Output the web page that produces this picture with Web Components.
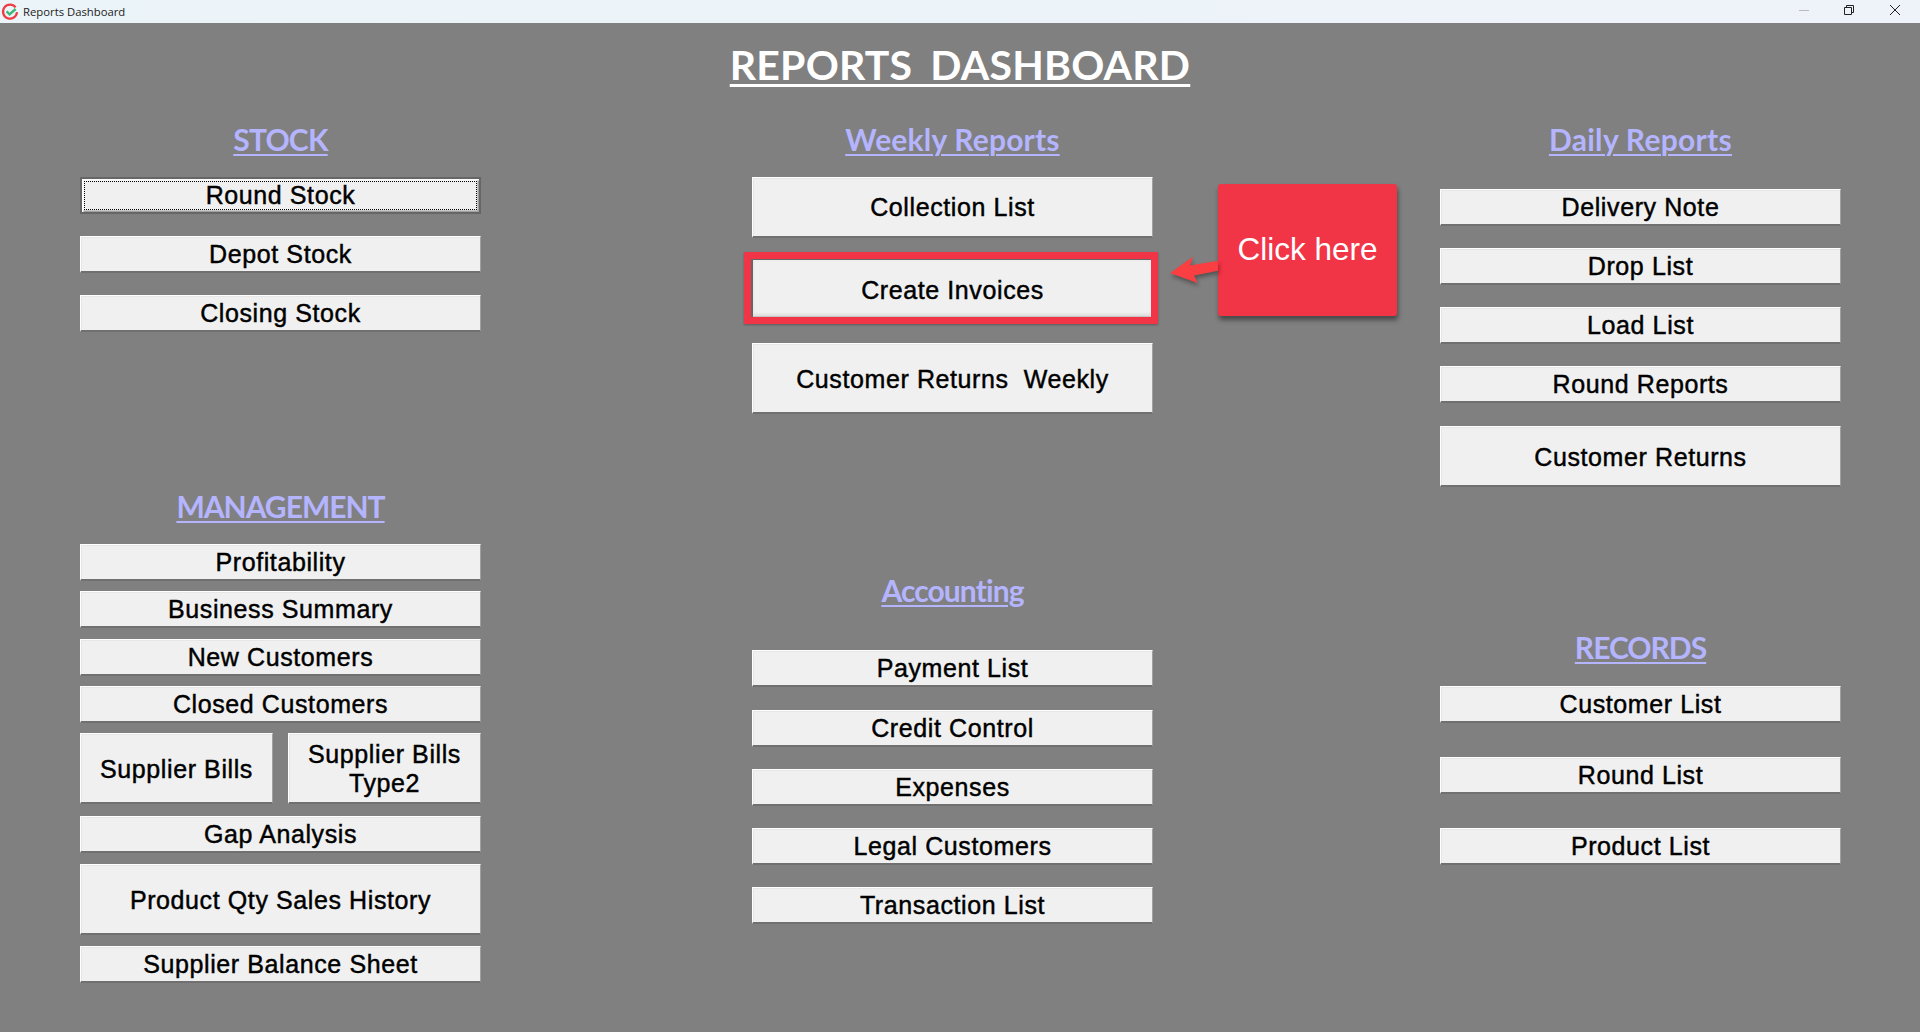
<!DOCTYPE html>
<html>
<head>
<meta charset="utf-8">
<title>Reports Dashboard</title>
<style>
html, body { margin: 0; height: 100%; background: #808080; overflow: hidden; }
</style>
</head>
<body>
<report-window>
  <report-column>
    <report-section title="STOCK" track="-0.8">
      <report-button top="23" default>Round Stock</report-button>
      <report-button top="22">Depot Stock</report-button>
      <report-button top="22">Closing Stock</report-button>
    </report-section>
    <report-section title="MANAGEMENT" track="-1" top="145">
      <report-button top="23">Profitability</report-button>
      <report-button top="10">Business Summary</report-button>
      <report-button top="11">New Customers</report-button>
      <report-button top="10">Closed Customers</report-button>
      <button-row top="10">
        <report-button h="71">Supplier Bills</report-button>
        <report-button h="71">Supplier Bills<br>Type2</report-button>
      </button-row>
      <report-button top="12">Gap Analysis</report-button>
      <report-button top="11" h="71">Product Qty Sales History</report-button>
      <report-button top="11">Supplier Balance Sheet</report-button>
    </report-section>
  </report-column>
  <report-column>
    <report-section title="Weekly Reports" track="0.2">
      <report-button top="23" h="61" nudge="0">Collection List</report-button>
      <report-button top="22" h="58" highlight>Create Invoices</report-button>
      <report-button top="25" h="71">Customer Returns&nbsp; Weekly</report-button>
    </report-section>
    <report-section title="Accounting" track="-0.9" top="147">
      <report-button top="45">Payment List</report-button>
      <report-button top="23">Credit Control</report-button>
      <report-button top="22">Expenses</report-button>
      <report-button top="22">Legal Customers</report-button>
      <report-button top="22">Transaction List</report-button>
    </report-section>
  </report-column>
  <report-column shift="16">
    <report-section title="Daily Reports" track="0.3">
      <report-button top="35">Delivery Note</report-button>
      <report-button top="22">Drop List</report-button>
      <report-button top="22">Load List</report-button>
      <report-button top="22">Round Reports</report-button>
      <report-button top="23" h="61">Customer Returns</report-button>
    </report-section>
    <report-section title="RECORDS" track="-1" top="131">
      <report-button top="24">Customer List</report-button>
      <report-button top="34">Round List</report-button>
      <report-button top="34">Product List</report-button>
    </report-section>
  </report-column>
  <click-callout slot="overlay">Click here</click-callout>
</report-window>

<script>
class ReportWindow extends HTMLElement {
    constructor() {
        super();
        this.attachShadow({ mode: "open" });
    }

    connectedCallback() {
        this.shadowRoot.innerHTML = `
            <style>
            :host { display: flex; flex-direction: column; height: 1032px; position: relative; background: #808080; }
            .bar {
                height: 23px; flex: none; display: flex; align-items: center;
                background: linear-gradient(90deg, #ebf4f8, #eef3f9);
                font: 11.3px "Open Sans", "Liberation Sans", sans-serif; color: #222;
            }
            .logo { width: 18px; height: 18px; margin: 0 4px 0 1px; flex: none; }
            .name { flex: 1; }
            .ctl { display: block; flex: none; }
            h1 {
                margin: 0; height: 87px; flex: none; text-align: center; box-sizing: border-box; padding-top: 16px;
                font: 700 41px/52px Lato, "Open Sans", sans-serif; color: #fff;
            }
            h1 span { text-decoration: underline; text-decoration-thickness: 3px; text-underline-offset: 4px; letter-spacing: 0.2px; word-spacing: 8px; }
            .cols { display: grid; grid-template-columns: 401px 401px 417px; column-gap: 271px; padding-left: 80px; }
            </style>
            <div class="bar">
                <svg class="logo" viewBox="0 0 18 18">
                    <path d="M14.600 4.400A7 7 0 1 0 16 9.200" fill="none" stroke="#ee3b44" stroke-width="2.200"/>
                    <path d="M5.600 8.400l3 3 6-5.400" fill="none" stroke="#3cb878" stroke-width="2.400"/>
                </svg>
                <span class="name">Reports Dashboard</span>
                <svg class="ctl" width="121" height="23" viewBox="0 0 121 23">
                    <path d="M0 10.500h10" stroke="#bbb" stroke-width="1"/>
                    <path d="M45.500 7.500h7v7h-7zM47.500 7.500v-2h7v7h-2" fill="none" stroke="#222" stroke-width="1"/>
                    <path d="M91 5l10 10M101 5L91 15" fill="none" stroke="#222" stroke-width="1"/>
                </svg>
            </div>
            <h1><span>REPORTS DASHBOARD</span></h1>
            <div class="cols"><slot></slot></div>
            <slot name="overlay"></slot>
        `;
    }
}

class ReportColumn extends HTMLElement {
    constructor() {
        super();
        this.attachShadow({ mode: "open" });
    }

    connectedCallback() {
        this.shadowRoot.innerHTML = `
            <style>:host { display: flex; flex-direction: column; padding-left: ${this.getAttribute("shift") || 0}px; }</style>
            <slot></slot>
        `;
    }
}

class ReportSection extends HTMLElement {
    constructor() {
        super();
        this.attachShadow({ mode: "open" });
    }

    connectedCallback() {
        const top = this.getAttribute("top") || 0;
        const track = this.getAttribute("track") || 0;
        this.shadowRoot.innerHTML = `
            <style>
            :host { display: block; margin-top: ${top}px; }
            h2 {
                margin: 0; height: 44px; box-sizing: border-box; padding-top: 11px; text-align: center;
                font: 700 30px/37px Lato, "Open Sans", sans-serif; color: #b4b4ff;
            }
            h2 span { text-decoration: underline; text-decoration-thickness: 2px; text-underline-offset: 3px; letter-spacing: ${track}px; }
            </style>
            <h2><span>${this.getAttribute("title")}</span></h2>
            <slot></slot>
        `;
    }
}

class ButtonRow extends HTMLElement {
    constructor() {
        super();
        this.attachShadow({ mode: "open" });
    }

    connectedCallback() {
        this.shadowRoot.innerHTML = `
            <style>
            :host { display: grid; grid-template-columns: 1fr 1fr; column-gap: 15px; margin-top: ${this.getAttribute("top") || 0}px; }
            </style>
            <slot></slot>
        `;
    }
}

class ReportButton extends HTMLElement {
    constructor() {
        super();
        this.attachShadow({ mode: "open" });
    }

    connectedCallback() {
        const top = this.getAttribute("top") || 0;
        const h = Number(this.getAttribute("h") || 37);
        const isDefault = this.hasAttribute("default");
        const highlight = this.hasAttribute("highlight");
        const nudge = this.getAttribute("nudge") || (highlight ? 4 : h >= 58 ? 2 : 0);
        this.shadowRoot.innerHTML = `
            <style>
            :host { display: block; position: relative; margin-top: ${top}px; height: ${h}px; }
            button {
                display: flex; align-items: center; justify-content: center; width: 100%; height: 100%;
                box-sizing: border-box; padding: ${nudge}px 0 0; text-align: center; color: #000; background: #f0f0f0;
                font: 25px/28.6px "Liberation Sans", Arial, sans-serif; letter-spacing: 0.6px;
                -webkit-text-stroke: 0.45px #000;
                border-style: solid; border-width: 1.5px 1.5px 2px;
                border-color: #fff #a0a0a0 #707070 #fff;
                box-shadow: inset 1px 1px 0 #e6e6e6;
            }
            button.default { border: 2px solid #666; box-shadow: inset 1.5px 1.5px 0 #fff, inset -1.5px -1.5px 0 #a0a0a0; outline: 1.5px dotted #000; outline-offset: -5px; }
            button.soft { border-color: #ececec #c8c8c8 #c4c4c4 #e4e4e4; box-shadow: inset 0 -2px 3px #ddd; }
            .frame { position: absolute; left: -8px; top: -8px; right: -5px; bottom: -6px; border: 7px solid #f13446; box-shadow: 0 1px 2px rgba(0,0,0,.3), inset 2px 1px 0 #666; pointer-events: none; }
            </style>
            <button class="${isDefault ? "default" : ""} ${highlight ? "soft" : ""}"><slot></slot></button>
            ${highlight ? '<div class="frame"></div>' : ""}
        `;
    }
}

class ClickCallout extends HTMLElement {
    constructor() {
        super();
        this.attachShadow({ mode: "open" });
        this.shadowRoot.innerHTML = `
            <style>
            :host { position: absolute; left: 1218px; top: 184px; width: 179px; height: 132px; }
            .box {
                width: 100%; height: 100%; background: #f13446; border-radius: 3px; color: #fff;
                display: flex; justify-content: center; box-sizing: border-box; padding-top: 46px;
                box-shadow: 1px 4px 5px rgba(0,0,0,.45);
                font: 31.5px/38px "Liberation Sans", Arial, sans-serif;
            }
            svg { position: absolute; left: -49px; top: 71px; filter: drop-shadow(1px 3px 2px rgba(0,0,0,.35)); }
            </style>
            <svg width="50" height="30" viewBox="0 0 50 30">
                <path d="M1 18L24 1.700 21 10.500 49 5.700 49 15.700 25 20.500 28.700 28Z" fill="#fa3f42"/>
            </svg>
            <div class="box"><slot></slot></div>
        `;
    }
}

customElements.define("report-window", ReportWindow);
customElements.define("report-column", ReportColumn);
customElements.define("report-section", ReportSection);
customElements.define("button-row", ButtonRow);
customElements.define("report-button", ReportButton);
customElements.define("click-callout", ClickCallout);
</script>
</body>
</html>
